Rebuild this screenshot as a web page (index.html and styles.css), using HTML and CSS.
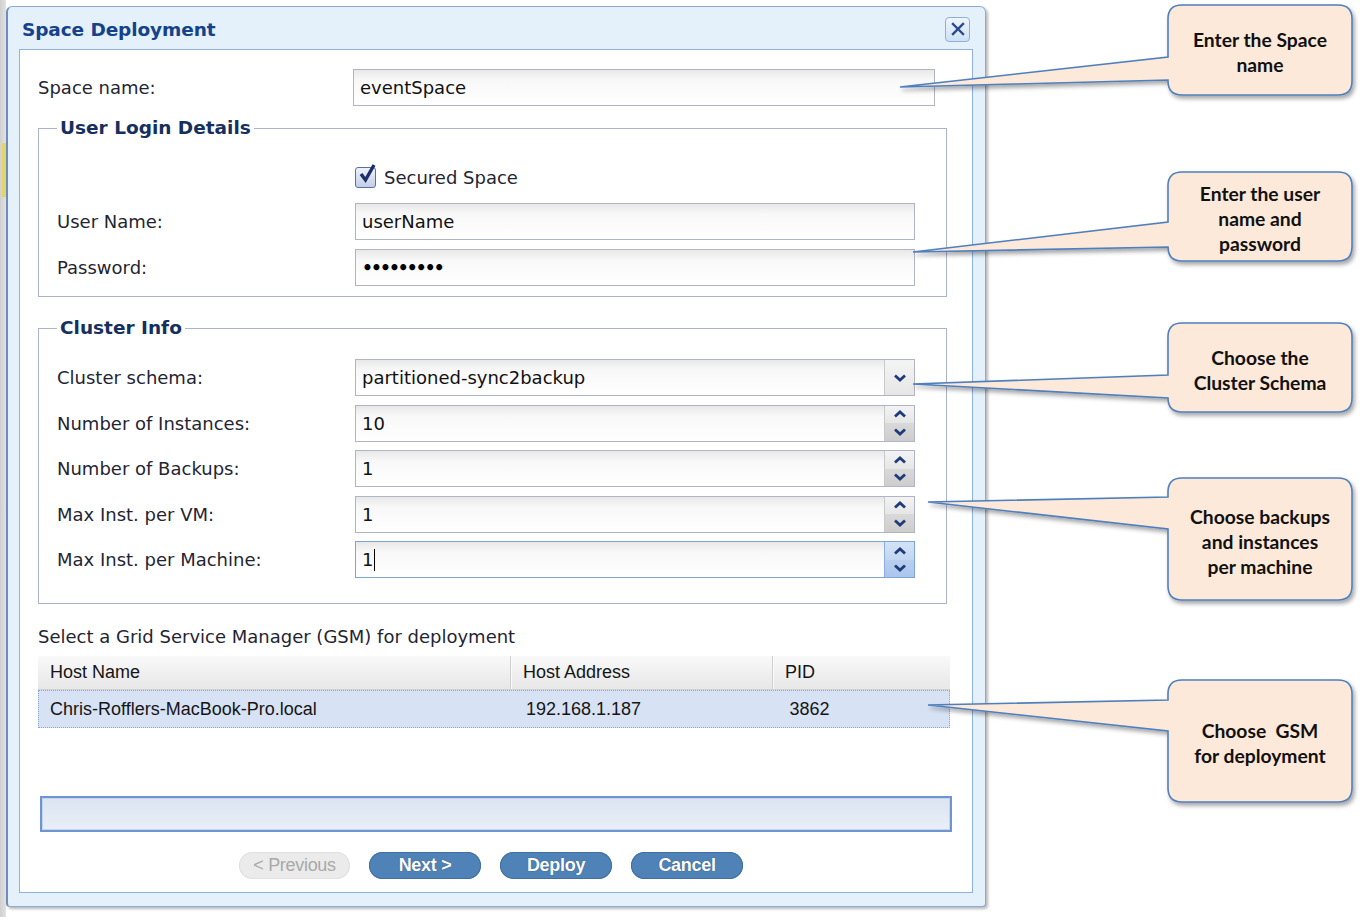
FILE: index.html
```html
<!DOCTYPE html>
<html lang="en">
<head>
<meta charset="utf-8">
<title>Space Deployment</title>
<link rel="stylesheet" href="styles.css">
</head>
<body>
<div class="page">
  <div class="backdrop-strip"></div>
  <div class="dialog">
    <div class="dialog-header">
      <span class="dialog-title">Space Deployment</span>
      <span class="close-btn">
        <svg width="16" height="16" viewBox="0 0 16 16"><path d="M3 3 L13 13 M13 3 L3 13" stroke="#2b4a8c" stroke-width="2.4" stroke-linecap="square" fill="none"/></svg>
      </span>
    </div>
    <div class="dialog-body">
      <div class="form-row top-row">
        <span class="lbl lbl-top">Space name:</span>
        <div class="field field-wide"><span class="field-text">eventSpace</span></div>
      </div>

      <fieldset class="group group-login">
        <legend>User Login Details</legend>
        <div class="group-rows gap-9">
          <div class="form-row check-row">
            <span class="lbl"></span>
            <div class="check">
              <span class="check-box">
                <svg width="22" height="24" viewBox="0 0 22 24"><path d="M5 12 L9.5 18 L18 3" stroke="#1b2f6b" stroke-width="3.4" fill="none" stroke-linejoin="miter"/></svg>
              </span>
              <span class="check-label">Secured Space</span>
            </div>
          </div>
          <div class="form-row">
            <span class="lbl">User Name:</span>
            <div class="field"><span class="field-text">userName</span></div>
          </div>
          <div class="form-row">
            <span class="lbl">Password:</span>
            <div class="field"><span class="field-text dots">•••••••••</span></div>
          </div>
        </div>
      </fieldset>

      <fieldset class="group group-cluster">
        <legend>Cluster Info</legend>
        <div class="group-rows gap-85">
          <div class="form-row">
            <span class="lbl">Cluster schema:</span>
            <div class="field">
              <span class="field-text">partitioned-sync2backup</span>
              <span class="drop-btn"><svg width="14" height="10" viewBox="0 0 14 10"><path d="M2 2.5 L7 7 L12 2.5" stroke="#1f3b7a" stroke-width="2.8" fill="none"/></svg></span>
            </div>
          </div>
          <div class="form-row">
            <span class="lbl">Number of Instances:</span>
            <div class="field">
              <span class="field-text">10</span>
              <span class="spin-btns">
                <span class="spin-up"><svg width="14" height="10" viewBox="0 0 14 10"><path d="M2 7.5 L7 3 L12 7.5" stroke="#1f3b7a" stroke-width="2.8" fill="none"/></svg></span>
                <span class="spin-down"><svg width="14" height="10" viewBox="0 0 14 10"><path d="M2 2.5 L7 7 L12 2.5" stroke="#1f3b7a" stroke-width="2.8" fill="none"/></svg></span>
              </span>
            </div>
          </div>
          <div class="form-row">
            <span class="lbl">Number of Backups:</span>
            <div class="field">
              <span class="field-text">1</span>
              <span class="spin-btns">
                <span class="spin-up"><svg width="14" height="10" viewBox="0 0 14 10"><path d="M2 7.5 L7 3 L12 7.5" stroke="#1f3b7a" stroke-width="2.8" fill="none"/></svg></span>
                <span class="spin-down"><svg width="14" height="10" viewBox="0 0 14 10"><path d="M2 2.5 L7 7 L12 2.5" stroke="#1f3b7a" stroke-width="2.8" fill="none"/></svg></span>
              </span>
            </div>
          </div>
          <div class="form-row">
            <span class="lbl">Max Inst. per VM:</span>
            <div class="field">
              <span class="field-text">1</span>
              <span class="spin-btns">
                <span class="spin-up"><svg width="14" height="10" viewBox="0 0 14 10"><path d="M2 7.5 L7 3 L12 7.5" stroke="#1f3b7a" stroke-width="2.8" fill="none"/></svg></span>
                <span class="spin-down"><svg width="14" height="10" viewBox="0 0 14 10"><path d="M2 2.5 L7 7 L12 2.5" stroke="#1f3b7a" stroke-width="2.8" fill="none"/></svg></span>
              </span>
            </div>
          </div>
          <div class="form-row">
            <span class="lbl">Max Inst. per Machine:</span>
            <div class="field field-focus">
              <span class="field-text">1<span class="caret"></span></span>
              <span class="spin-btns">
                <span class="spin-up"><svg width="14" height="10" viewBox="0 0 14 10"><path d="M2 7.5 L7 3 L12 7.5" stroke="#1f3b7a" stroke-width="2.8" fill="none"/></svg></span>
                <span class="spin-down"><svg width="14" height="10" viewBox="0 0 14 10"><path d="M2 2.5 L7 7 L12 2.5" stroke="#1f3b7a" stroke-width="2.8" fill="none"/></svg></span>
              </span>
            </div>
          </div>
        </div>
      </fieldset>

      <div class="gsm-caption">Select a Grid Service Manager (GSM) for deployment</div>

      <div class="grid">
        <div class="grid-head">
          <span class="gcol c1">Host Name</span>
          <span class="gcol c2">Host Address</span>
          <span class="gcol c3">PID</span>
        </div>
        <div class="grid-row">
          <span class="gcol c1">Chris-Rofflers-MacBook-Pro.local</span>
          <span class="gcol c2">192.168.1.187</span>
          <span class="gcol c3">3862</span>
        </div>
      </div>

      <div class="progress"></div>

      <div class="buttons">
        <span class="btn btn-disabled">&lt; Previous</span>
        <span class="btn">Next &gt;</span>
        <span class="btn">Deploy</span>
        <span class="btn">Cancel</span>
      </div>
    </div>
  </div>

  <div class="annotations">
    <svg class="callout-shapes" width="1361" height="917" viewBox="0 0 1361 917">
      <defs>
        <filter id="sh" x="-5%" y="-10%" width="115%" height="130%">
          <feDropShadow dx="2" dy="3" stdDeviation="2" flood-color="#000" flood-opacity="0.35"/>
        </filter>
      </defs>
      <g fill="#fde9d9" stroke="#4f7fbd" stroke-width="1.6" filter="url(#sh)">
        <path d="M1182,5 H1338 Q1352,5 1352,19 V81 Q1352,95 1338,95 H1182 Q1168,95 1168,81 V80 L900,87 L1168,57 V19 Q1168,5 1182,5 Z"/>
        <path d="M1182,172 H1338 Q1352,172 1352,186 V247 Q1352,261 1338,261 H1182 Q1168,261 1168,247 L913,252 L1168,222 V186 Q1168,172 1182,172 Z"/>
        <path d="M1182,323 H1338 Q1352,323 1352,337 V398 Q1352,412 1338,412 H1182 Q1168,412 1168,398 L913,384 L1168,375 V337 Q1168,323 1182,323 Z"/>
        <path d="M1182,478 H1338 Q1352,478 1352,492 V586 Q1352,600 1338,600 H1182 Q1168,600 1168,586 V529 L928,502 L1168,497 V492 Q1168,478 1182,478 Z"/>
        <path d="M1182,680 H1338 Q1352,680 1352,694 V788 Q1352,802 1338,802 H1182 Q1168,802 1168,788 V731 L928,705 L1168,700 V694 Q1168,680 1182,680 Z"/>
      </g>
    </svg>
    <div class="note note-1">Enter the Space<br>name</div>
    <div class="note note-2">Enter the user<br>name and<br>password</div>
    <div class="note note-3">Choose the<br>Cluster Schema</div>
    <div class="note note-4">Choose backups<br>and instances<br>per machine</div>
    <div class="note note-5">Choose&nbsp; GSM<br>for deployment</div>
  </div>
</div>
</body>
</html>
```

FILE: styles.css
```css
* { box-sizing: border-box; }

html, body {
  margin: 0;
  padding: 0;
}

body {
  width: 1361px;
  height: 917px;
  overflow: hidden;
  background: #ffffff;
  font-family: "DejaVu Sans", "Liberation Sans", sans-serif;
  color: #1f2533;
}

.page {
  position: relative;
  display: flex;
  align-items: flex-start;
  width: 1361px;
  height: 917px;
}

.backdrop-strip {
  width: 6px;
  height: 917px;
  background:
    linear-gradient(to bottom, transparent 0, transparent 143px, #e4d56b 143px, #e4d56b 197px, transparent 197px) 2px 0 / 4px 100% no-repeat,
    linear-gradient(to right, #cfcfcf, #e2e2e2);
}

/* ---------- dialog ---------- */
.dialog {
  margin-top: 6px;
  width: 980px;
  height: 901px;
  display: flex;
  flex-direction: column;
  background: #e4f0fa;
  border: 1px solid #8eaad6;
  border-left: 2px solid #6d8dbd;
  border-radius: 6px 6px 4px 4px;
  box-shadow: 2px 2px 3px rgba(0, 0, 0, 0.28);
}

.dialog-header {
  height: 42px;
  flex: none;
  display: flex;
  align-items: center;
  justify-content: space-between;
  padding: 2px 15px 0 14px;
}

.dialog-title {
  font-weight: bold;
  font-size: 18.5px;
  color: #15428b;
  letter-spacing: -0.1px;
}

.close-btn {
  width: 25px;
  height: 25px;
  display: flex;
  align-items: center;
  justify-content: center;
  border: 1px solid #8fb0dd;
  border-radius: 4px;
  background: linear-gradient(to bottom, #eef5fd, #cfe0f5);
}

.dialog-body {
  flex: 1;
  margin: 0 12px 13px 11px;
  background: #ffffff;
  border: 1px solid #8fb1e3;
  padding: 19px 0 0 18px;
  display: flex;
  flex-direction: column;
}

/* ---------- form rows ---------- */
.form-row {
  display: flex;
  align-items: center;
  height: 37px;
}

.check-row { padding-top: 4px; }

.lbl {
  flex: none;
  width: 298px;
  font-size: 18px;
  color: #1f2533;
  white-space: nowrap;
}

.lbl-top { width: 315px; }

.field {
  flex: none;
  width: 560px;
  height: 37px;
  display: flex;
  align-items: stretch;
  border: 1px solid #b1b4c4;
  background: linear-gradient(to bottom, #e8e8e8 0, #f8f8f8 10px, #ffffff 100%);
}

.field-wide { width: 582px; }

.field-text {
  flex: 1;
  display: flex;
  align-items: center;
  padding-left: 6px;
  font-size: 18px;
  color: #111111;
  white-space: nowrap;
}

.dots {
  font-size: 17px;
  font-weight: bold;
  letter-spacing: -1.9px;
  color: #000;
}

.caret {
  display: inline-block;
  width: 1px;
  height: 22px;
  margin-left: 1px;
  background: #000;
}

.drop-btn {
  flex: none;
  width: 30px;
  display: flex;
  align-items: center;
  justify-content: center;
  border-left: 1px solid #c9c9c9;
  background: linear-gradient(to bottom, #f4f4f4, #e6e6e6);
}

.spin-btns {
  flex: none;
  width: 30px;
  display: flex;
  flex-direction: column;
  border-left: 1px solid #c9c9c9;
}

.spin-up, .spin-down {
  flex: 1;
  display: flex;
  align-items: center;
  justify-content: center;
}

.spin-up { background: linear-gradient(to bottom, #f3f3f3, #e6e6e6); }
.spin-down { background: linear-gradient(to bottom, #d9d9d9, #cdcdcd); }

.field-focus { border-color: #7ea5da; }
.field-focus .spin-btns { border-left-color: #8aaee0; }
.field-focus .spin-up { background: linear-gradient(to bottom, #d3e2f6, #c3d6f1); }
.field-focus .spin-down { background: linear-gradient(to bottom, #b9cfef, #abc5eb); }

/* ---------- checkbox ---------- */
.check {
  display: flex;
  align-items: center;
  gap: 8px;
}

.check-box {
  position: relative;
  width: 21px;
  height: 21px;
  border: 1px solid #5e6f9c;
  border-radius: 3px;
  background: linear-gradient(to bottom, #eef2fa, #c3cfe8);
}

.check-box svg {
  position: absolute;
  left: 0;
  top: -6px;
}

.check-label {
  font-size: 18px;
  color: #1f2533;
}

/* ---------- fieldsets ---------- */
.group {
  width: 909px;
  margin: 0;
  min-width: 0;
  border: 1px solid #adb2cb;
  padding: 18px 31px 10px 18px;
}

.group legend {
  padding: 0 3px;
  font-weight: bold;
  font-size: 18.5px;
  line-height: 22px;
  color: #15305e;
}

.group-login { margin-top: 11px; }

.group-cluster {
  margin-top: 20px;
  padding-top: 20px;
  padding-bottom: 25px;
}

.group-rows {
  display: flex;
  flex-direction: column;
}

.gap-9 { gap: 9px; }
.gap-85 { gap: 8.5px; }

/* ---------- GSM grid ---------- */
.gsm-caption {
  margin-top: 22px;
  font-size: 18px;
  line-height: 22px;
  color: #1f2533;
}

.grid {
  margin-top: 8px;
  width: 912px;
  font-family: "Liberation Sans", Arial, sans-serif;
  font-size: 18px;
  color: #151515;
}

.grid-head {
  display: flex;
  height: 34px;
  background: linear-gradient(to bottom, #f9f9f9, #e7e7e7);
  border-bottom: 1px solid #d2d2d2;
}

.grid-row {
  display: flex;
  height: 38px;
  background: #d7e2f4;
  border: 1px dotted #8aa6d8;
}

.gcol {
  display: flex;
  align-items: center;
  padding-left: 12px;
  white-space: nowrap;
}

.grid-head .gcol { border-right: 1px solid #d0d0d0; box-shadow: 1px 0 0 #fafafa; }
.grid-head .c3 { border-right: none; box-shadow: none; }

.c1 { width: 473px; }
.c2 { width: 262px; }
.c3 { width: 177px; }

.grid-row .c1 { padding-left: 11px; }
.grid-row .c2 { padding-left: 15px; }
.grid-row .c3 { padding-left: 17px; }

/* ---------- progress ---------- */
.progress {
  margin-top: 68px;
  margin-left: 2px;
  width: 912px;
  height: 36px;
  border: 2px solid #6e95cf;
  background: linear-gradient(to bottom, #dbe4f2, #e9eff8);
  box-shadow: inset 0 0 0 1px #c4d4ee;
}

/* ---------- buttons ---------- */
.buttons {
  margin-top: 20px;
  padding-left: 201px;
  display: flex;
  gap: 19px;
}

.btn {
  width: 112px;
  height: 27px;
  display: flex;
  align-items: center;
  justify-content: center;
  border-radius: 14px;
  background: #4f83b8;
  color: #ffffff;
  font-family: "Liberation Sans", Arial, sans-serif;
  font-size: 18px;
  font-weight: bold;
  letter-spacing: -0.3px;
  text-shadow: 0 0 1px rgba(20, 40, 80, 0.7);
  box-shadow: inset 0 0 0 1px #3f6fa3;
}

.btn-disabled {
  width: 111px;
  background: #ebebeb;
  color: #a9a9a9;
  font-weight: normal;
  text-shadow: none;
  box-shadow: inset 0 0 0 1px #e0e0e0;
}

/* ---------- annotations (callouts over the screenshot) ---------- */
.annotations {
  position: absolute;
  left: 0;
  top: 0;
  width: 1361px;
  height: 917px;
  pointer-events: none;
}

.callout-shapes {
  position: absolute;
  left: 0;
  top: 0;
}

.note {
  position: absolute;
  left: 1168px;
  width: 184px;
  display: flex;
  align-items: center;
  justify-content: center;
  text-align: center;
  padding-top: 4px;
  font-family: Lato, "Open Sans", sans-serif;
  font-weight: bold;
  font-size: 19.3px;
  line-height: 25px;
  color: #111111;
}

.note-1 { top: 5px; height: 90px; }
.note-2 { top: 172px; height: 89px; }
.note-3 { top: 323px; height: 89px; }
.note-4 { top: 478px; height: 122px; }
.note-5 { top: 680px; height: 122px; }
```
